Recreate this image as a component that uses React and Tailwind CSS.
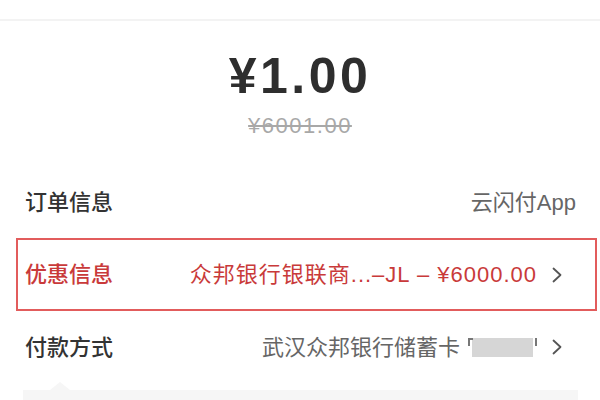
import React from 'react'

const FONT = { fontFamily: '"Liberation Sans", "Noto Sans CJK SC", sans-serif' }

function Chevron() {
  return (
    <svg width="10" height="16" viewBox="0 0 10 16" fill="none" className="shrink-0">
      <polyline points="1.5,1.5 8.5,8 1.5,14.5" stroke="#555" strokeWidth="1.8" strokeLinecap="round" strokeLinejoin="round" />
    </svg>
  )
}

function MaskedCard() {
  return (
    <span className="relative inline-block w-[69px] h-[19px]">
      <span className="absolute left-[4px] right-[4px] top-0 bottom-0 bg-[#d6d6d6]" />
      <span className="absolute left-0 top-0 w-[5px] h-[8px] border-l-2 border-t-2 border-[#777]" />
      <span className="absolute right-0 top-0 w-[5px] h-[8px] border-r-2 border-[#777]" />
    </span>
  )
}

export default function App() {
  return (
    <div className="w-[600px] h-[400px] overflow-hidden bg-white text-[#333]" style={FONT}>
      <div className="h-[21px] border-b-2 border-[#f3f3f3]" />

      <div className="flex flex-col items-center pt-[30px] pb-[29px]">
        <div className="text-[50px] leading-[50px] font-bold tracking-[3.5px] text-[#2e2e2e]">¥1.00</div>
        <div className="mt-[14px] text-[22px] leading-[22px] tracking-[1.5px] text-[#a8a8a8] line-through decoration-[#a8a8a8]">
          ¥6001.00
        </div>
      </div>

      <div className="h-[72px] flex items-center justify-between pl-[25px] pr-[24px] text-[22px] font-medium">
        <span>订单信息</span>
        <span className="text-[#666] font-normal">云闪付App</span>
      </div>

      <div className="h-[73px] ml-[16px] mr-[3px] border-2 border-[#e25c5c] flex items-center justify-between pl-[7px] pr-[33px] text-[22px] text-[#c93a3a]">
        <span className="font-medium">优惠信息</span>
        <span className="flex items-center gap-[15px]">
          <span className="tracking-[1px]">众邦银行银联商...–JL – ¥6000.00</span>
          <Chevron />
        </span>
      </div>

      <div className="h-[72px] flex items-center justify-between pl-[25px] pr-[38px] text-[22px]">
        <span className="font-medium">付款方式</span>
        <span className="flex items-center gap-[15px]">
          <span className="flex items-center gap-[8px] text-[#666]">
            <span>武汉众邦银行储蓄卡</span>
            <MaskedCard />
          </span>
          <Chevron />
        </span>
      </div>

      <div className="relative mt-[7px] ml-[23px] mr-[22px] h-[20px] bg-[#f6f6f6]">
        <div className="absolute left-[27px] -top-[8px] w-0 h-0 border-l-[10px] border-r-[10px] border-b-[8px] border-l-transparent border-r-transparent border-b-[#f6f6f6]" />
      </div>
    </div>
  )
}
